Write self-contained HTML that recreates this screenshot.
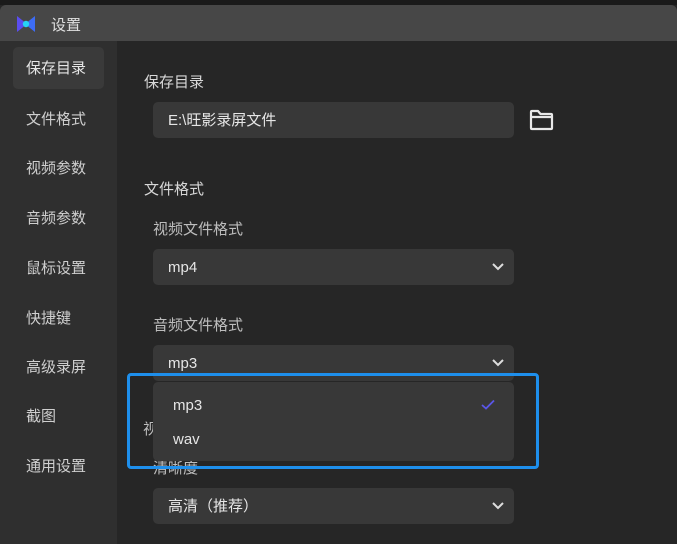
<!DOCTYPE html><html><head><meta charset="utf-8"><style>
*{margin:0;padding:0;box-sizing:border-box}
body{width:677px;height:544px;overflow:hidden;background:#262626;font-family:"Liberation Sans","Noto Sans CJK SC",sans-serif;position:relative;color:#ddd}
.a{position:absolute}
.top{left:0;top:0;width:677px;height:5px;background:#1a1a1a}
.tb{left:0;top:5px;width:677px;height:36px;background:#474747;border-radius:6px 6px 0 0}
.side{left:0;top:41px;width:117px;height:503px;background:#2f2f2f}
.it{position:absolute;left:13px;width:91px;height:42px;line-height:44px;padding-left:13px;font-size:15px;color:#cfcfcf}
.act{background:#3a3a3a;border-radius:5px;color:#e6e6e6}
.lb{font-size:15px;color:#d8d8d8}
.sl{font-size:15px;color:#bdbdbd}
.box{background:#383838;border-radius:5px;left:153px;width:361px;height:36px;font-size:15px;color:#e6e6e6;padding-left:15px;line-height:38px}
.chev{position:absolute;right:10px;top:13px}
</style></head><body>
<div class="a top"></div>
<div class="a tb">
<svg class="a" style="left:16px;top:10px" width="20" height="18" viewBox="0 0 20 18"><path d="M1 1 L11 9 L1 17 Z" fill="#5b4df0"/><path d="M19 1 L9 9 L19 17 Z" fill="#3d6cf5"/><circle cx="10" cy="9" r="3.2" fill="#26d3f5"/></svg>
<div class="a" style="left:51px;top:9px;font-size:15px;color:#e0e0e0">设置</div>
</div>
<div class="a side">
<div class="it act" style="top:6px">保存目录</div>
<div class="it" style="top:57px">文件格式</div>
<div class="it" style="top:106px">视频参数</div>
<div class="it" style="top:156px">音频参数</div>
<div class="it" style="top:206px">鼠标设置</div>
<div class="it" style="top:256px">快捷键</div>
<div class="it" style="top:305px">高级录屏</div>
<div class="it" style="top:354px">截图</div>
<div class="it" style="top:404px">通用设置</div>
</div>
<div class="a lb" style="left:144px;top:71px">保存目录</div>
<div class="a box" style="top:102px">E:\旺影录屏文件</div>
<svg class="a" style="left:528px;top:108px" width="27" height="24" viewBox="0 0 27 24"><path d="M3 4 Q3 3 4 3 L10 3 L12.5 6 L23 6 Q24 6 24 7 L24 20 Q24 21 23 21 L4 21 Q3 21 3 20 Z M3 9 L24 9" fill="none" stroke="#e8e8e8" stroke-width="2.2" stroke-linejoin="round"/></svg>
<div class="a lb" style="left:144px;top:178px">文件格式</div>
<div class="a sl" style="left:153px;top:218px">视频文件格式</div>
<div class="a box" style="top:249px">mp4<svg class="chev" width="12" height="10" viewBox="0 0 12 10"><path d="M1 2 L6 7 L11 2" fill="none" stroke="#ddd" stroke-width="2"/></svg></div>
<div class="a sl" style="left:153px;top:314px">音频文件格式</div>
<div class="a box" style="top:345px">mp3<svg class="chev" width="12" height="10" viewBox="0 0 12 10"><path d="M1 2 L6 7 L11 2" fill="none" stroke="#ddd" stroke-width="2"/></svg></div>
<div class="a sl" style="left:143px;top:418px">视</div>
<div class="a sl" style="left:153px;top:457px">清晰度</div>
<div class="a box" style="top:488px">高清（推荐）<svg class="chev" width="12" height="10" viewBox="0 0 12 10"><path d="M1 2 L6 7 L11 2" fill="none" stroke="#ddd" stroke-width="2"/></svg></div>
<div class="a" style="left:153px;top:382px;width:361px;height:79px;background:#383838;border-radius:5px">
<div class="a" style="left:20px;top:15px;font-size:15px;color:#e6e6e6">mp3</div>
<div class="a" style="left:20px;top:49px;font-size:15px;color:#e6e6e6">wav</div>
<svg class="a" style="left:328px;top:17px" width="14" height="11" viewBox="0 0 14 11"><path d="M1 6 L5 9.5 L13 1.5" fill="none" stroke="#5a56e8" stroke-width="1.8"/></svg>
</div>
<div class="a" style="left:127px;top:373px;width:412px;height:96px;border:3px solid #1e8fec;border-radius:4px"></div>
</body></html>
